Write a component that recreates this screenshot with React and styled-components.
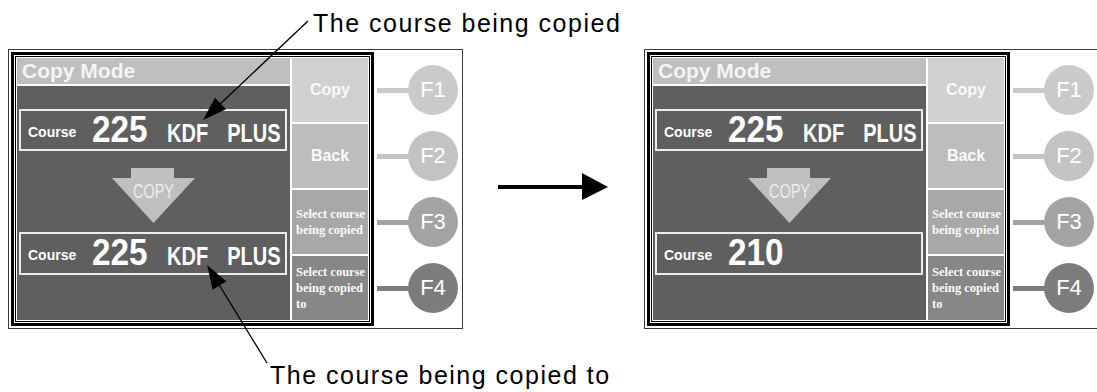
import React from 'react';
import styled, { createGlobalStyle } from 'styled-components';

const GlobalStyle = createGlobalStyle`
  html, body {
    margin: 0;
    padding: 0;
    background: #fff;
  }
  body {
    font-family: "Liberation Sans", Arial, sans-serif;
  }
`;

const Page = styled.div`
  position: relative;
  width: 1097px;
  height: 392px;
  overflow: hidden;
  background: #fff;
`;

const Caption = styled.div`
  box-sizing: border-box;
  padding-left: ${props => props.$indent}px;
  font-size: 25px;
  line-height: 28px;
  letter-spacing: 1.5px;
  color: #000;
  white-space: nowrap;
`;

const TopCaption = styled(Caption)`
  height: 49px;
  padding-top: 9px;
`;

const BottomCaption = styled(Caption)`
  margin-top: 32px;
`;

const FigureRow = styled.div`
  display: flex;
  padding-left: 8px;
  height: 280px;
`;

const Frame = styled.div`
  flex-shrink: 0;
  box-sizing: border-box;
  width: 455px;
  height: 280px;
  display: flex;
  align-items: flex-start;
  padding: 2px;
  border: 1px solid #3a3a3a;
  background: #fff;
`;

const Screen = styled.div`
  border: 3px solid #000;
  padding: 1px;
  background: #fff;
`;

const Bezel = styled.div`
  border: 1px solid #000;
  padding: 1px;
  background: #fff;
`;

const Display = styled.div`
  display: flex;
  gap: 2px;
  width: 351px;
  height: 262px;
  background: #fff;
`;

const MainColumn = styled.div`
  width: 273px;
  display: flex;
  flex-direction: column;
  gap: 2px;
`;

const TitleBar = styled.div`
  height: 26px;
  padding-left: 5px;
  background: #bfbfbf;
  color: #f4f4f4;
  font-size: 21px;
  font-weight: bold;
  line-height: 26px;
`;

const Body = styled.div`
  flex: 1;
  display: flex;
  flex-direction: column;
  padding: 23px 3px 0 2px;
  background: #5f5f5f;
`;

const CourseBox = styled.div`
  box-sizing: border-box;
  height: ${props => props.$height}px;
  padding-left: 7px;
  border: 2px solid #ececec;
  color: #fff;
  font-size: 34px;
  font-weight: bold;
  line-height: 37px;
  white-space: nowrap;
  overflow: hidden;
`;

const Label = styled.span`
  font-size: 14px;
  line-height: 1;
  vertical-align: 5px;
  margin-right: 16px;
`;

// the panel font is a condensed face; squeeze the regular one
const Number = styled.span`
  display: inline-block;
  font-size: 37px;
  font-weight: bold;
  line-height: 1;
  margin-right: 13px;
  transform: scaleX(0.9);
  transform-origin: left center;
`;

const Name = styled.span`
  display: inline-block;
  font-size: 25px;
  line-height: 1;
  word-spacing: 17px;
  transform: scaleX(0.8);
  transform-origin: left center;
`;

const CopyArrow = styled.svg`
  display: block;
  align-self: center;
  margin: 17px 0 9px;
`;

const ButtonColumn = styled.div`
  width: 76px;
  display: flex;
  flex-direction: column;
  gap: 2px;
`;

const SoftKey = styled.div`
  flex: 1;
  display: flex;
  align-items: center;
  justify-content: ${props => (props.$small ? 'flex-start' : 'center')};
  padding-left: ${props => (props.$small ? 4 : 0)}px;
  background: ${props => props.$bg};
  color: #fafafa;
  font-family: ${props =>
    props.$small ? '"Liberation Serif", "Times New Roman", serif' : '"Liberation Sans", Arial, sans-serif'};
  font-size: ${props => (props.$small ? 12.5 : 16)}px;
  font-weight: bold;
  line-height: ${props => (props.$small ? 16 : 20)}px;
`;

const KeyColumn = styled.div`
  display: flex;
  flex-direction: column;
  gap: 2px;
  height: 262px;
  margin-top: 6px;
  padding-left: 3px;
`;

const KeyRow = styled.div`
  flex: 1;
  display: flex;
  align-items: center;
`;

const KeyLead = styled.div`
  width: 33px;
  height: 5px;
  background: ${props => props.$color};
`;

const KeyCircle = styled.div`
  width: 50px;
  height: 50px;
  margin-left: -2px;
  border-radius: 50%;
  display: flex;
  align-items: center;
  justify-content: center;
  background: ${props => props.$color};
  color: #fff;
  font-size: 22px;
`;

const ArrowGap = styled.svg`
  display: block;
  flex-shrink: 0;
`;

const Leaders = styled.svg`
  position: absolute;
  left: 0;
  top: 0;
  pointer-events: none;
`;

const keys = [
  { id: 'F1', color: '#cacaca', label: 'Copy', bg: '#d0d0d0' },
  { id: 'F2', color: '#c3c3c3', label: 'Back', bg: '#bdbdbd' },
  { id: 'F3', color: '#a3a3a3', label: 'Select course being copied', bg: '#a8a8a8', small: true },
  { id: 'F4', color: '#7c7c7c', label: 'Select course being copied to', bg: '#878787', small: true },
];

const ArrowDown = () => (
  <CopyArrow width="83" height="55" viewBox="0 0 83 55">
    <polygon points="19,0 62,0 62,10 83,10 41.5,55 0,10 19,10" fill="#bfbfbf" />
    <text
      x="41.5"
      y="30"
      textAnchor="middle"
      fontFamily="Liberation Sans, Arial, sans-serif"
      fontSize="21"
      textLength="41"
      lengthAdjust="spacingAndGlyphs"
      fill="#ececec"
    >
      COPY
    </text>
  </CopyArrow>
);

const Course = ({ number, name, height }) => (
  <CourseBox $height={height}>
    <Label>Course</Label>
    <Number>{number}</Number>
    {name && <Name>{name}</Name>}
  </CourseBox>
);

const Figure = ({ target }) => (
  <Frame>
    <Screen>
      <Bezel>
        <Display>
          <MainColumn>
            <TitleBar>Copy Mode</TitleBar>
            <Body>
              <Course number="225" name="KDF PLUS" height={42} />
              <ArrowDown />
              <Course number={target.number} name={target.name} height={43} />
            </Body>
          </MainColumn>
          <ButtonColumn>
            {keys.map(k => (
              <SoftKey key={k.id} $bg={k.bg} $small={k.small}>
                <span>{k.label}</span>
              </SoftKey>
            ))}
          </ButtonColumn>
        </Display>
      </Bezel>
    </Screen>
    <KeyColumn>
      {keys.map(k => (
        <KeyRow key={k.id}>
          <KeyLead $color={k.color} />
          <KeyCircle $color={k.color}>{k.id}</KeyCircle>
        </KeyRow>
      ))}
    </KeyColumn>
  </Frame>
);

const App = () => (
  <Page>
    <GlobalStyle />
    <TopCaption $indent={313}>The course being copied</TopCaption>
    <FigureRow>
      <Figure target={{ number: '225', name: 'KDF PLUS' }} />
      <ArrowGap width="181" height="280" viewBox="0 0 181 280">
        <line x1="35" y1="138" x2="121" y2="138" stroke="#000" strokeWidth="4" />
        <polygon points="119,124 119,151 145,138" fill="#000" />
      </ArrowGap>
      <Figure target={{ number: '210' }} />
    </FigureRow>
    <BottomCaption $indent={270}>The course being copied to</BottomCaption>
    <Leaders width="1097" height="392" viewBox="0 0 1097 392">
      <line x1="308" y1="21" x2="218" y2="106" stroke="#000" strokeWidth="1.3" />
      <polygon points="203,120 226,109.3 215,97.7" fill="#000" />
      <line x1="267" y1="363" x2="218" y2="283" stroke="#000" strokeWidth="1.3" />
      <polygon points="207,265 226.3,281.3 212.7,289.7" fill="#000" />
    </Leaders>
  </Page>
);

export default App;
